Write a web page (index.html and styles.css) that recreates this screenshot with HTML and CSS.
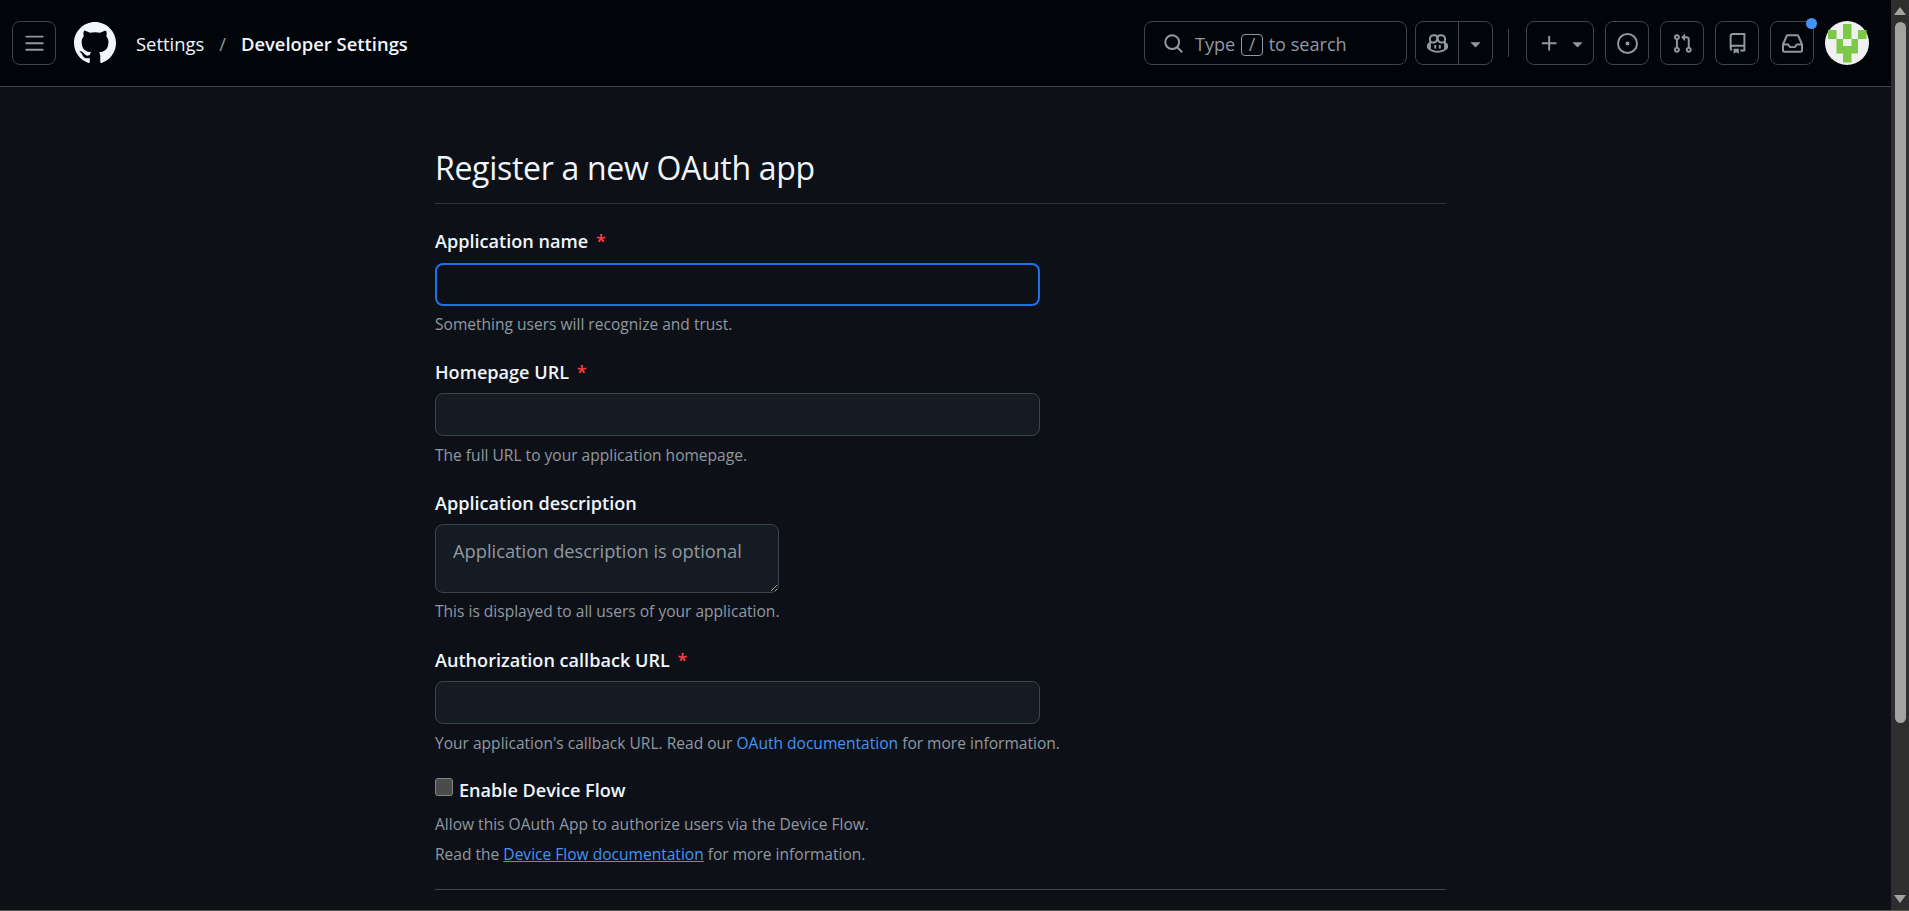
FILE: index.html
```html
<!DOCTYPE html>
<html lang="en">
<head>
  <meta charset="UTF-8">
  <title>Register a new OAuth app</title>
  <link rel="stylesheet" href="styles.css">
</head>
<body>
  <div class="wrapper">
    <div class="page">
      <header class="topbar">
        <button class="icon-btn menu-btn" type="button">
          <svg class="icon" viewBox="0 0 16 16"><path d="M1 2.75A.75.75 0 0 1 1.75 2h12.5a.75.75 0 0 1 0 1.5H1.75A.75.75 0 0 1 1 2.75Zm0 5A.75.75 0 0 1 1.75 7h12.5a.75.75 0 0 1 0 1.5H1.75A.75.75 0 0 1 1 7.75ZM1.75 12h12.5a.75.75 0 0 1 0 1.5H1.75a.75.75 0 0 1 0-1.5Z"/></svg>
        </button>
        <svg class="logo" viewBox="0 0 16 16"><path d="M8 0c4.42 0 8 3.58 8 8a8.013 8.013 0 0 1-5.45 7.59c-.4.08-.55-.17-.55-.38 0-.27.01-1.13.01-2.2 0-.75-.25-1.23-.54-1.48 1.78-.2 3.65-.88 3.65-3.95 0-.88-.31-1.59-.82-2.15.08-.2.36-1.02-.08-2.12 0 0-.67-.22-2.2.82-.64-.18-1.32-.27-2-.27-.68 0-1.36.09-2 .27-1.53-1.03-2.2-.82-2.2-.82-.44 1.1-.16 1.92-.08 2.12-.51.56-.82 1.28-.82 2.15 0 3.06 1.86 3.75 3.64 3.95-.23.2-.44.55-.51 1.07-.46.21-1.61.55-2.33-.66-.15-.24-.6-.83-1.23-.82-.67.01-.27.38.01.53.34.19.73.9.82 1.13.16.45.68 1.31 2.69.94 0 .67.01 1.3.01 1.49 0 .21-.15.45-.55.38A7.995 7.995 0 0 1 0 8c0-4.42 3.58-8 8-8Z"/></svg>
        <nav class="crumbs">
          <a href="#">Settings</a>
          <span class="crumb-sep">/</span>
          <a href="#" class="crumb-current">Developer Settings</a>
        </nav>
        <div class="topbar-right">
          <div class="search">
            <svg class="icon" viewBox="0 0 16 16"><path d="M10.68 11.74a6 6 0 0 1-7.922-8.982 6 6 0 0 1 8.982 7.922l3.04 3.04a.749.749 0 0 1-.326 1.275.749.749 0 0 1-.734-.215ZM11.5 7a4.499 4.499 0 1 0-8.997 0A4.499 4.499 0 0 0 11.5 7Z"/></svg>
            <span class="search-text">Type <kbd>/</kbd> to search</span>
          </div>
          <div class="split-btn">
            <span class="split-main">
              <svg class="icon" viewBox="0 0 16 16"><path d="M7.998 15.035c-4.562 0-7.873-2.914-7.998-3.749V9.338c.085-.628.677-1.686 1.588-2.065.013-.07.024-.143.036-.218.029-.183.06-.384.126-.612-.201-.508-.254-1.084-.254-1.656 0-.87.128-1.769.693-2.484.579-.733 1.494-1.124 2.724-1.261 1.206-.134 2.262.034 2.944.765.05.053.096.108.139.165.044-.057.094-.112.143-.165.682-.731 1.738-.899 2.944-.765 1.23.137 2.145.528 2.724 1.261.566.715.693 1.614.693 2.484 0 .572-.053 1.148-.254 1.656.066.228.098.429.126.612.012.076.024.148.037.218.924.385 1.522 1.471 1.591 2.095v1.872c0 .766-3.351 3.795-8.002 3.795Zm0-1.485c2.28 0 4.584-1.11 5.002-1.433V7.862l-.023-.116c-.49.21-1.075.291-1.727.291-1.146 0-2.059-.327-2.71-.991A3.222 3.222 0 0 1 8 6.303a3.24 3.24 0 0 1-.544.743c-.65.664-1.563.991-2.71.991-.652 0-1.236-.081-1.727-.291l-.023.116v4.255c.419.323 2.722 1.433 5.002 1.433ZM6.762 2.83c-.193-.206-.637-.413-1.682-.297-1.019.113-1.479.404-1.713.7-.247.312-.369.789-.369 1.554 0 .793.129 1.171.308 1.371.162.181.519.379 1.442.379.853 0 1.339-.235 1.638-.54.315-.322.527-.827.617-1.553.117-.935-.037-1.395-.241-1.614Zm4.155-.297c-1.044-.116-1.488.091-1.681.297-.204.219-.359.679-.242 1.614.091.726.303 1.231.618 1.553.299.305.784.54 1.638.54.922 0 1.28-.198 1.442-.379.179-.2.308-.578.308-1.371 0-.765-.123-1.242-.37-1.554-.233-.296-.693-.587-1.713-.7Z"/><path d="M6.25 9.037a.75.75 0 0 1 .75.75v1.501a.75.75 0 0 1-1.5 0V9.787a.75.75 0 0 1 .75-.75Zm4.25.75v1.501a.75.75 0 0 1-1.5 0V9.787a.75.75 0 0 1 1.5 0Z"/></svg>
            </span>
            <span class="split-caret">
              <svg class="icon" viewBox="0 0 16 16"><path d="m4.427 7.427 3.396 3.396a.25.25 0 0 0 .354 0l3.396-3.396A.25.25 0 0 0 11.396 7H4.604a.25.25 0 0 0-.177.427Z"/></svg>
            </span>
          </div>
          <span class="bar-divider"></span>
          <button class="icon-btn plus-btn" type="button">
            <svg class="icon" viewBox="0 0 16 16"><path d="M7.75 2a.75.75 0 0 1 .75.75V7h4.25a.75.75 0 0 1 0 1.5H8.5v4.25a.75.75 0 0 1-1.5 0V8.5H2.75a.75.75 0 0 1 0-1.5H7V2.75A.75.75 0 0 1 7.75 2Z"/></svg>
            <svg class="icon" viewBox="0 0 16 16"><path d="m4.427 7.427 3.396 3.396a.25.25 0 0 0 .354 0l3.396-3.396A.25.25 0 0 0 11.396 7H4.604a.25.25 0 0 0-.177.427Z"/></svg>
          </button>
          <button class="icon-btn" type="button">
            <svg class="icon" viewBox="0 0 16 16"><path d="M8 9.5a1.5 1.5 0 1 0 0-3 1.5 1.5 0 0 0 0 3Z"/><path d="M8 0a8 8 0 1 1 0 16A8 8 0 0 1 8 0ZM1.5 8a6.5 6.5 0 1 0 13 0 6.5 6.5 0 0 0-13 0Z"/></svg>
          </button>
          <button class="icon-btn" type="button">
            <svg class="icon" viewBox="0 0 16 16"><path d="M1.5 3.25a2.25 2.25 0 1 1 3 2.122v5.256a2.251 2.251 0 1 1-1.5 0V5.372A2.25 2.25 0 0 1 1.5 3.25Zm5.677-.177L9.573.677A.25.25 0 0 1 10 .854V2.5h1A2.5 2.5 0 0 1 13.5 5v5.628a2.251 2.251 0 1 1-1.5 0V5a1 1 0 0 0-1-1h-1v1.646a.25.25 0 0 1-.427.177L7.177 3.427a.25.25 0 0 1 0-.354ZM3.75 2.5a.75.75 0 1 0 0 1.5.75.75 0 0 0 0-1.5Zm0 9.5a.75.75 0 1 0 0 1.5.75.75 0 0 0 0-1.5Zm8.25.75a.75.75 0 1 0 1.5 0 .75.75 0 0 0-1.5 0Z"/></svg>
          </button>
          <button class="icon-btn" type="button">
            <svg class="icon" viewBox="0 0 16 16"><path d="M2 2.5A2.5 2.5 0 0 1 4.5 0h8.75a.75.75 0 0 1 .75.75v12.5a.75.75 0 0 1-.75.75h-2.5a.75.75 0 0 1 0-1.5h1.75v-2h-8a1 1 0 0 0-.714 1.7.75.75 0 1 1-1.072 1.05A2.495 2.495 0 0 1 2 11.5Zm10.5-1h-8a1 1 0 0 0-1 1v6.708A2.486 2.486 0 0 1 4.5 9h8ZM5 12.25a.25.25 0 0 1 .25-.25h3.5a.25.25 0 0 1 .25.25v3.25a.25.25 0 0 1-.4.2l-1.45-1.087a.249.249 0 0 0-.3 0L5.4 15.7a.25.25 0 0 1-.4-.2Z"/></svg>
          </button>
          <button class="icon-btn inbox-btn" type="button">
            <svg class="icon" viewBox="0 0 16 16"><path d="M2.8 2.06A1.75 1.75 0 0 1 4.41 1h7.18c.7 0 1.333.417 1.61 1.06l2.74 6.395c.04.093.06.194.06.295v4.5A1.75 1.75 0 0 1 14.25 15H1.75A1.75 1.75 0 0 1 0 13.25v-4.5c0-.101.02-.202.06-.295Zm1.61.44a.25.25 0 0 0-.23.152L1.887 8H4.75a.75.75 0 0 1 .6.3L6.625 10h2.75l1.275-1.7a.75.75 0 0 1 .6-.3h2.863L11.82 2.652a.25.25 0 0 0-.23-.152Zm10.09 7h-2.875l-1.275 1.7a.75.75 0 0 1-.6.3h-3.5a.75.75 0 0 1-.6-.3L4.375 9.5H1.5v3.75c0 .138.112.25.25.25h12.5a.25.25 0 0 0 .25-.25Z"/></svg>
            <span class="inbox-dot"></span>
          </button>
          <svg class="avatar" viewBox="0 0 44 44">
            <circle cx="22" cy="22" r="22" fill="#f0f0f0"/>
            <path fill="#7dc846" d="M18 3h8.500v15H18zM3 9h8.500v9H3zM33 9h8.500v9H33zM11.500 18H18v7h-6.500zM26.500 18H33v7h-6.500zM11.500 25H33v7.500H11.500zM18 32.500h8.500V41.500H18z"/>
          </svg>
        </div>
      </header>

      <main class="main-content">
        <h1 class="page-title">Register a new OAuth app</h1>
        <form class="app-form">
          <div class="form-group form-group-name">
            <label>Application name <span class="required">*</span></label>
            <input type="text" class="text-field is-focused">
            <p class="hint">Something users will recognize and trust.</p>
          </div>
          <div class="form-group">
            <label>Homepage URL <span class="required">*</span></label>
            <input type="text" class="text-field">
            <p class="hint">The full URL to your application homepage.</p>
          </div>
          <div class="form-group form-group-desc">
            <label>Application description</label>
            <textarea class="text-area" placeholder="Application description is optional"></textarea>
            <p class="hint">This is displayed to all users of your application.</p>
          </div>
          <div class="form-group">
            <label>Authorization callback URL <span class="required">*</span></label>
            <input type="text" class="text-field">
            <p class="hint">Your application's callback URL. Read our <a href="#">OAuth documentation</a> for more information.</p>
          </div>
          <div class="device-flow">
            <label class="check-label"><input type="checkbox" class="check-box">Enable Device Flow</label>
            <p class="hint">Allow this OAuth App to authorize users via the Device Flow.</p>
            <p class="hint">Read the <a href="#" class="underlined">Device Flow documentation</a> for more information.</p>
          </div>
        </form>
        <hr class="form-rule">
      </main>
    </div>

    <div class="scrollbar">
      <span class="scroll-up"></span>
      <span class="scroll-thumb"></span>
      <span class="scroll-down"></span>
    </div>
  </div>
</body>
</html>
```

FILE: styles.css
```css
* { box-sizing: border-box; }

html, body {
  margin: 0;
  padding: 0;
  height: 100%;
  overflow: hidden;
}

body {
  font-family: "Open Sans", "Noto Sans", sans-serif;
  font-size: 18.1px;
  background: #0d1117;
  color: #f0f6fc;
}

.wrapper {
  display: flex;
  height: 911px;
  overflow: hidden;
  border-bottom: 1px solid #55554f;
}

.page {
  flex: 1;
  min-width: 0;
}

/* top bar */
.topbar {
  display: flex;
  align-items: center;
  height: 87px;
  padding: 0 22px 0 12px;
  background: #010409;
  border-bottom: 1px solid #3d444d;
}

.icon {
  width: 21px;
  height: 21px;
  fill: #9198a1;
  display: block;
}

.icon-btn {
  display: flex;
  align-items: center;
  justify-content: center;
  width: 44px;
  height: 44px;
  padding: 0;
  background: transparent;
  border: 1px solid #3d444d;
  border-radius: 8px;
  position: relative;
}

.logo {
  width: 42px;
  height: 42px;
  fill: #f0f6fc;
  margin-left: 18px;
}

.crumbs {
  display: flex;
  align-items: center;
  margin-left: 20px;
  padding-top: 1px;
  font-size: 18.4px;
}

.crumbs a {
  color: #f0f6fc;
  text-decoration: none;
}

.crumb-sep {
  color: #9198a1;
  margin: 0 15px;
}

.crumb-current {
  font-weight: 600;
}

.topbar-right {
  display: flex;
  align-items: center;
  gap: 11px;
  margin-left: auto;
}

.search {
  display: flex;
  align-items: center;
  gap: 11px;
  width: 263px;
  height: 44px;
  margin-right: -3px;
  padding-left: 18px;
  border: 1px solid #3d444d;
  border-radius: 8px;
  color: #9198a1;
}

.search-text {
  padding-top: 1px;
  white-space: nowrap;
}

kbd {
  display: inline-block;
  width: 22px;
  height: 22px;
  margin: 0 1px;
  border: 1px solid #9198a1;
  border-radius: 4px;
  font-family: inherit;
  font-size: 18px;
  line-height: 19px;
  text-align: center;
}

.split-btn {
  display: flex;
  width: 78px;
  height: 44px;
  border: 1px solid #3d444d;
  border-radius: 8px;
}

.split-main {
  display: flex;
  align-items: center;
  justify-content: center;
  width: 43px;
  border-right: 1px solid #3d444d;
}

.split-caret {
  display: flex;
  align-items: center;
  justify-content: center;
  flex: 1;
}

.bar-divider {
  width: 1px;
  height: 28px;
  margin: 0 6px 0 4px;
  background: #3d444d;
}

.plus-btn {
  justify-content: flex-start;
  width: 68px;
  padding-left: 12px;
  gap: 7px;
}

.inbox-dot {
  position: absolute;
  top: -4px;
  right: -4px;
  width: 11px;
  height: 11px;
  border-radius: 50%;
  background: #4493f8;
}

.avatar {
  width: 44px;
  height: 44px;
}

/* form */
.main-content {
  width: 1011px;
  margin: 0 0 0 435px;
  padding-top: 57px;
}

.page-title {
  margin: 0;
  padding-bottom: 11px;
  border-bottom: 1px solid #2f343c;
  font-size: 32px;
  font-weight: 400;
  line-height: 48px;
  letter-spacing: -0.3px;
}

.app-form {
  padding-top: 25px;
}

.form-group {
  margin-bottom: 25px;
}

.form-group-desc {
  margin-bottom: 26px;
}

.form-group label {
  display: block;
  margin-bottom: 9px;
  font-weight: 600;
  line-height: 24px;
}

.form-group-name label {
  margin-bottom: 10px;
}

.required {
  color: #ff4040;
  margin-left: 3px;
}

.text-field {
  display: block;
  width: 605px;
  height: 43px;
  background: #151b23;
  border: 1px solid #3d444d;
  border-radius: 8px;
}

.text-field.is-focused {
  background: #0d1117;
  border: 2px solid #1f6feb;
}

.text-area {
  display: block;
  width: 344px;
  height: 69px;
  padding: 13px 17px;
  background: #151b23;
  border: 1px solid #3d444d;
  border-radius: 8px;
  color: #9198a1;
  color-scheme: dark;
  font-family: inherit;
  font-size: 18.3px;
}

.text-area::placeholder {
  color: #9198a1;
}

.hint {
  margin: 8px 0 0;
  color: #9198a1;
  font-size: 15.55px;
  line-height: 22px;
}

.form-group-name .hint,
.form-group-desc .hint {
  margin-top: 7px;
}

.hint a {
  color: #4493f8;
  text-decoration: none;
}

.hint a.underlined {
  text-decoration: underline;
}

.device-flow {
  margin-top: -1px;
}

.check-label {
  display: flex;
  align-items: center;
  gap: 6px;
  font-weight: 600;
  line-height: 24px;
}

.check-label + .hint {
  margin-top: 11px;
}

.check-box {
  appearance: none;
  width: 18px;
  height: 18px;
  margin: 0 0 6px;
  background: #4b4b4b;
  border: 1px solid #858585;
  border-radius: 3px;
}

.form-rule {
  margin: 24px 0 0;
  border: 0;
  border-top: 1px solid #3d444d;
}

/* window scrollbar */
.scrollbar {
  display: flex;
  flex-direction: column;
  align-items: center;
  width: 18px;
  background: #2e2e2e;
}

.scroll-up,
.scroll-down {
  width: 0;
  height: 0;
  margin: 7px 0;
  border-left: 6px solid transparent;
  border-right: 6px solid transparent;
}

.scroll-up {
  border-bottom: 8px solid #a3a3a3;
}

.scroll-down {
  margin-top: auto;
  border-top: 8px solid #a3a3a3;
}

.scroll-thumb {
  width: 11px;
  height: 701px;
  background: #a3a3a3;
  border-radius: 6px;
}
```
